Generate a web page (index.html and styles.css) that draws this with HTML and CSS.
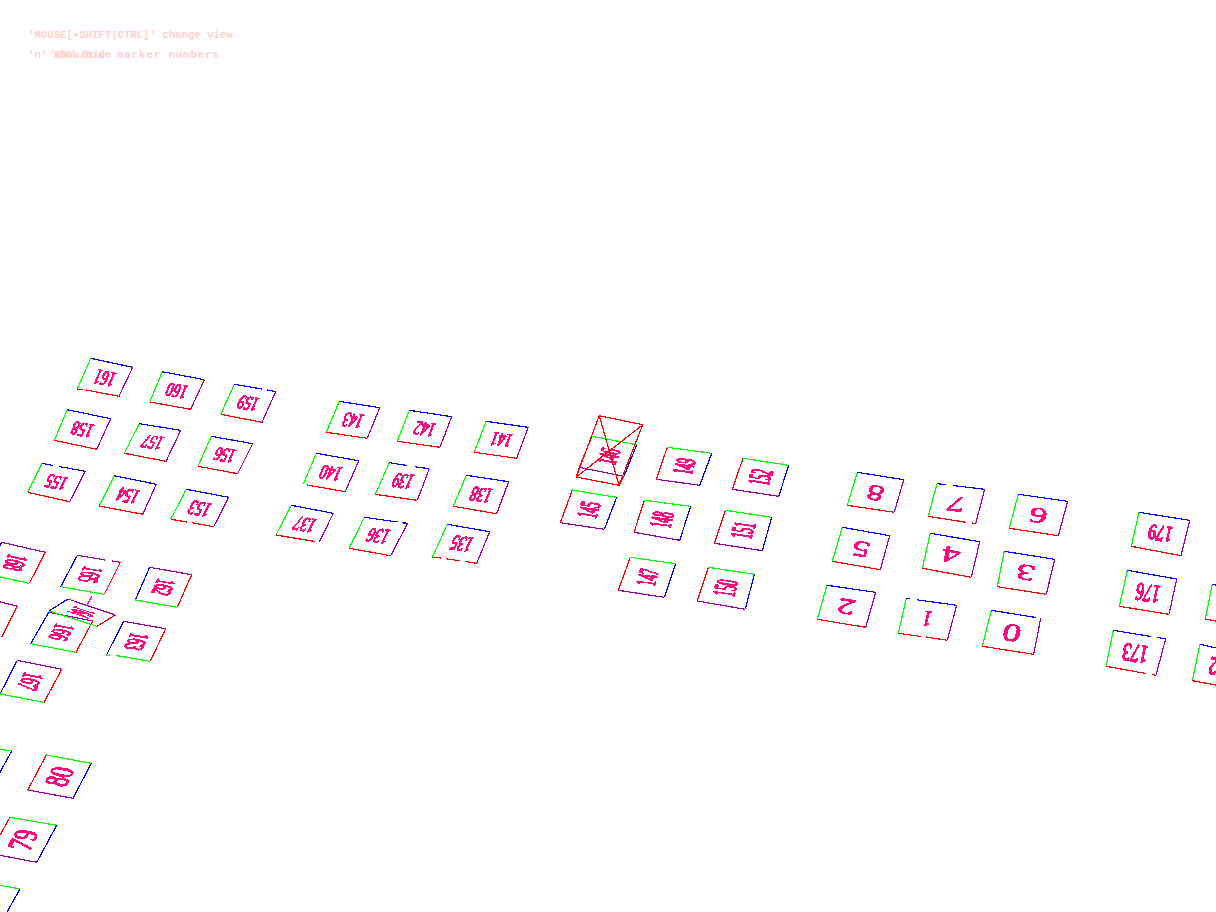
FILE: index.html
```html
<!DOCTYPE html>
<html lang="en">
<head>
<meta charset="utf-8">
<title>Marker viewer</title>
<link rel="stylesheet" href="styles.css">
</head>
<body>
<svg class="scene" width="1216" height="912" viewBox="0 0 1216 912" xmlns="http://www.w3.org/2000/svg">
<defs>
<filter id="hard" x="-10%" y="-10%" width="120%" height="120%" color-interpolation-filters="sRGB">
<feComponentTransfer><feFuncA type="discrete" tableValues="0 1 1"/></feComponentTransfer>
</filter>
</defs>
<g class="hud">
<text x="28" y="38">'MOUSE[+SHIFT|CTRL]' change view</text>
<text x="28" y="58">'n' show/hide</text>
<text x="117" y="58" class="hud-wider">marker numbers</text>
<text x="49" y="58" class="hud-exit">'ESC' exit</text>
</g>

<g class="marker"><path class="g" d="M90.7 358.3L77.3 389"/><path class="b" d="M90.7 358.3L132.7 367.3"/><path class="p" d="M132.7 367.3L119 396.3"/><path class="r" d="M119 396.3L86 390M83 389.6L77.3 389"/><text transform="matrix(-.42 -.09 .134 -.307 104.9 377.7)" textLength="48" lengthAdjust="spacingAndGlyphs" y="22">161</text></g>
<g class="marker"><path class="g" d="M162.3 371.7L149.7 402"/><path class="b" d="M162.3 371.7L204.3 379.7"/><path class="p" d="M204.3 379.7L190.7 409.3"/><path class="r" d="M190.7 409.3L149.7 402"/><text transform="matrix(-.42 -.08 .126 -.303 176.8 390.7)" textLength="48" lengthAdjust="spacingAndGlyphs" y="22">160</text></g>
<g class="marker"><path class="g" d="M234.3 384.3L220.7 414.3"/><path class="b" d="M234.3 384.3L262 389M267 390L275.7 391.7"/><path class="p" d="M275.7 391.7L262 422.3"/><path class="r" d="M262 422.3L220.7 414.3"/><text transform="matrix(-.414 -.074 .136 -.3 248.2 403.2)" textLength="48" lengthAdjust="spacingAndGlyphs" y="22">159</text></g>
<g class="marker"><path class="g" d="M67.3 409.7L54.3 440.3"/><path class="b" d="M67.3 409.7L110.7 418.7"/><path class="p" d="M110.7 418.7L96.7 449.3"/><path class="r" d="M96.7 449.3L54.3 440.3"/><text transform="matrix(-.434 -.09 .13 -.306 82.3 429.5)" textLength="48" lengthAdjust="spacingAndGlyphs" y="22">158</text></g>
<g class="marker"><path class="g" d="M139.3 423.7L124.3 453.3"/><path class="b" d="M139.3 423.7L180.7 430.3"/><path class="p" d="M180.7 430.3L166 461.3"/><path class="r" d="M166 461.3L124.3 453.3"/><text transform="matrix(-.414 -.066 .15 -.296 152.6 442.2)" textLength="48" lengthAdjust="spacingAndGlyphs" y="22">157</text></g>
<g class="marker"><path class="g" d="M211.3 436.3L198 466.3"/><path class="b" d="M211.3 436.3L252.7 443.7"/><path class="p" d="M252.7 443.7L237.7 473.7"/><path class="r" d="M237.7 473.7L198 466.3"/><text transform="matrix(-.414 -.074 .133 -.3 224.9 455)" textLength="48" lengthAdjust="spacingAndGlyphs" y="22">156</text></g>
<g class="marker"><path class="g" d="M42 463.3L27.7 492.3"/><path class="b" d="M42 463.3L53 465.5M59 466.5L85.3 471.3"/><path class="p" d="M85.3 471.3L69.7 501.7"/><path class="r" d="M69.7 501.7L27.7 492.3"/><text transform="matrix(-.433 -.08 .143 -.29 56.2 482.2)" textLength="48" lengthAdjust="spacingAndGlyphs" y="22">155</text></g>
<g class="marker"><path class="g" d="M114.3 475.7L99.3 506"/><path class="b" d="M114.3 475.7L156.3 484.3"/><path class="p" d="M156.3 484.3L142.7 514.3"/><path class="r" d="M142.7 514.3L99.3 506"/><text transform="matrix(-.42 -.086 .15 -.303 128.2 495.1)" textLength="48" lengthAdjust="spacingAndGlyphs" y="22">154</text></g>
<g class="marker"><path class="g" d="M186.3 489.3L170.7 519.3"/><path class="b" d="M186.3 489.3L228.7 497.3"/><path class="p" d="M228.7 497.3L213.7 526.7"/><path class="r" d="M213.7 526.7L192 522.8M187 522L170.7 519.3"/><text transform="matrix(-.424 -.08 .156 -.3 199.9 508.2)" textLength="48" lengthAdjust="spacingAndGlyphs" y="22">153</text></g>

<g class="marker"><path class="g" d="M339.3 401.3L326.3 432.3"/><path class="b" d="M339.3 401.3L379.7 407.7"/><path class="p" d="M379.7 407.7L367.3 438.3"/><path class="r" d="M367.3 438.3L326.3 432.3"/><text transform="matrix(-.404 -.064 .13 -.31 353.2 419.9)" textLength="48" lengthAdjust="spacingAndGlyphs" y="22">143</text></g>
<g class="marker"><path class="g" d="M409.3 410.3L397.3 441.3"/><path class="b" d="M409.3 410.3L451.7 416.7"/><path class="p" d="M451.7 416.7L440 447.3"/><path class="r" d="M440 447.3L397.3 441.3"/><text transform="matrix(-.424 -.064 .12 -.31 424.6 428.9)" textLength="48" lengthAdjust="spacingAndGlyphs" y="22">142</text></g>
<g class="marker"><path class="g" d="M486 421.3L474.3 452.3"/><path class="b" d="M486 421.3L528.3 427.3"/><path class="p" d="M528.3 427.3L516.7 458.3"/><path class="r" d="M516.7 458.3L474.3 452.3"/><text transform="matrix(-.423 -.06 .117 -.31 501.3 439.8)" textLength="48" lengthAdjust="spacingAndGlyphs" y="22">141</text></g>
<g class="marker"><path class="g" d="M316.3 453.3L303.3 484.3"/><path class="b" d="M316.3 453.3L358.7 460.7"/><path class="p" d="M358.7 460.7L345.3 491.7"/><path class="r" d="M345.3 491.7L307 485"/><text transform="matrix(-.424 -.074 .13 -.31 330.9 472.5)" textLength="48" lengthAdjust="spacingAndGlyphs" y="22">140</text></g>
<g class="marker"><path class="g" d="M389.3 462.7L375.3 494.3"/><path class="b" d="M389.3 462.7L407 465.5M415 466.8L429.3 468.7"/><path class="p" d="M429.3 468.7L417.3 500.3"/><path class="r" d="M417.3 500.3L375.3 494.3"/><text transform="matrix(-.4 -.06 .14 -.316 402.8 481.5)" textLength="48" lengthAdjust="spacingAndGlyphs" y="22">139</text></g>
<g class="marker"><path class="g" d="M466.3 475.3L453.3 506.3"/><path class="b" d="M466.3 475.3L508.7 481.7"/><path class="p" d="M508.7 481.7L496.7 513.7"/><path class="r" d="M496.7 513.7L453.3 506.3"/><text transform="matrix(-.424 -.064 .13 -.31 481.3 494.3)" textLength="48" lengthAdjust="spacingAndGlyphs" y="22">138</text></g>
<g class="marker"><path class="g" d="M291.3 505.3L276 535"/><path class="b" d="M291.3 505.3L333.3 513.3"/><path class="p" d="M333.3 513.3L319.3 542.3"/><path class="r" d="M315 541.5L276 535"/><text transform="matrix(-.42 -.08 .153 -.297 305 524)" textLength="48" lengthAdjust="spacingAndGlyphs" y="22">137</text></g>
<g class="marker"><path class="g" d="M364.3 517.3L349.3 548.3"/><path class="b" d="M364.3 517.3L397.5 522M402 522.8L407.7 523.3"/><path class="p" d="M407.7 523.3L390.7 555.7"/><path class="r" d="M390.7 555.7L349.3 548.3"/><text transform="matrix(-.434 -.06 .15 -.31 378 536.2)" textLength="48" lengthAdjust="spacingAndGlyphs" y="22">136</text></g>
<g class="marker"><path class="g" d="M447.3 524.3L432.3 557.3"/><path class="b" d="M447.3 524.3L489.7 531.7"/><path class="p" d="M489.7 531.7L476.7 563.3"/><path class="r" d="M476.7 563.3L465 561.5M460 560.8L446 558.8M441 558L432.3 557.3"/><text transform="matrix(-.424 -.074 .15 -.33 461.5 544.2)" textLength="48" lengthAdjust="spacingAndGlyphs" y="22">135</text></g>

<g class="marker"><path class="r" d="M592 436.3L579.3 467.3"/><path class="g" d="M592 436.3L636.7 444.7"/><path class="b" d="M636.7 444.7L624 476.3"/><path class="p" d="M624 476.3L579.3 467.3"/><text transform="matrix(.127 -.31 .447 .084 608 456.2)" textLength="48" lengthAdjust="spacingAndGlyphs" y="22">146</text></g>
<g class="marker"><path class="r" d="M667.3 447.3L656.3 479.3"/><path class="g" d="M667.3 447.3L711.7 453.3"/><path class="b" d="M711.7 453.3L699.7 485.3"/><path class="p" d="M699.7 485.3L656.3 479.3"/><text transform="matrix(.11 -.32 .444 .06 683.8 466.3)" textLength="48" lengthAdjust="spacingAndGlyphs" y="22">149</text></g>
<g class="marker"><path class="r" d="M743 458.3L732.3 489.3"/><path class="g" d="M743 458.3L788.7 465.3"/><path class="b" d="M788.7 465.3L778.7 496.3"/><path class="p" d="M778.7 496.3L732.3 489.3"/><text transform="matrix(.107 -.31 .457 .07 760.7 477.3)" textLength="48" lengthAdjust="spacingAndGlyphs" y="22">152</text></g>
<g class="marker"><path class="r" d="M572.3 490L560.3 522.7"/><path class="g" d="M572.3 490L616.7 497.3"/><path class="b" d="M616.7 497.3L604.3 529.3"/><path class="p" d="M604.3 529.3L560.3 522.7"/><text transform="matrix(.12 -.327 .444 .073 588.4 509.8)" textLength="48" lengthAdjust="spacingAndGlyphs" y="22">145</text></g>
<g class="marker"><path class="r" d="M644.3 500.3L634 532.3"/><path class="g" d="M644.3 500.3L690.7 506.3"/><path class="b" d="M690.7 506.3L679.7 540.3"/><path class="p" d="M679.7 540.3L634 532.3"/><text transform="matrix(.103 -.32 .464 .06 662.2 519.8)" textLength="48" lengthAdjust="spacingAndGlyphs" y="22">148</text></g>
<g class="marker"><path class="r" d="M725.3 510.3L714.3 543.3"/><path class="g" d="M725.3 510.3L771.7 517.3"/><path class="b" d="M771.7 517.3L762.3 550.7"/><path class="p" d="M762.3 550.7L714.3 543.3"/><text transform="matrix(.11 -.33 .464 .07 743.4 530.4)" textLength="48" lengthAdjust="spacingAndGlyphs" y="22">151</text></g>
<g class="marker"><path class="r" d="M630.3 557.3L618.3 590.3"/><path class="g" d="M630.3 557.3L675.7 563.7"/><path class="b" d="M675.7 563.7L664.3 597.3"/><path class="p" d="M664.3 597.3L618.3 590.3"/><text transform="matrix(.12 -.33 .454 .064 647.2 577.2)" textLength="48" lengthAdjust="spacingAndGlyphs" y="22">147</text></g>
<g class="marker"><path class="r" d="M708.3 567.3L697.3 601"/><path class="g" d="M708.3 567.3L754.3 574.3"/><path class="b" d="M754.3 574.3L745.3 609.3"/><path class="p" d="M745.3 609.3L697.3 601"/><text transform="matrix(.11 -.337 .46 .07 726.3 588)" textLength="48" lengthAdjust="spacingAndGlyphs" y="22">150</text></g>
<path class="box" d="M599.3 415.7L642.7 424.7L619 485.3L576.3 477ZM599.3 415.7L619 485.3M642.7 424.7L576.3 477M576.3 477L579.3 467.3M619 485.3L624 476.3"/>

<g class="marker"><path class="g" d="M857.3 472.3L847.3 505.3"/><path class="b" d="M857.3 472.3L903.7 479.7"/><path class="p" d="M903.7 479.7L894.3 512.3"/><path class="r" d="M894.3 512.3L847.3 505.3"/><text class="solo" transform="matrix(-.464 -.074 .1 -.33 875.7 492.4)" textLength="37" lengthAdjust="spacingAndGlyphs" y="21">8</text></g>
<g class="marker"><path class="g" d="M937 483.7L928.3 516.3"/><path class="b" d="M937 483.7L946 484.7M953 485.5L984.7 489.3"/><path class="p" d="M984.7 489.3L975.7 523.7"/><path class="r" d="M975.7 523.7L972 523M966 522.3L928.3 516.3"/><text class="solo" transform="matrix(-.477 -.056 .087 -.326 956.4 503.3)" textLength="37" lengthAdjust="spacingAndGlyphs" y="21">7</text></g>
<g class="marker"><path class="g" d="M1018.3 494.3L1009.3 528.3"/><path class="b" d="M1018.3 494.3L1067.7 501.3"/><path class="p" d="M1067.7 501.3L1058.3 535.7"/><path class="r" d="M1058.3 535.7L1009.3 528.3"/><text class="solo" transform="matrix(-.494 -.07 .09 -.34 1038.4 514.9)" textLength="37" lengthAdjust="spacingAndGlyphs" y="21">6</text></g>
<g class="marker"><path class="g" d="M842.3 527.3L832.3 561.3"/><path class="b" d="M842.3 527.3L889.7 535.7"/><path class="p" d="M889.7 535.7L880.3 569.7"/><path class="r" d="M880.3 569.7L832.3 561.3"/><text class="solo" transform="matrix(-.474 -.084 .1 -.34 861.2 548.5)" textLength="37" lengthAdjust="spacingAndGlyphs" y="21">5</text></g>
<g class="marker"><path class="g" d="M930.3 533.3L922.3 568.3"/><path class="b" d="M930.3 533.3L979.7 541.7"/><path class="p" d="M979.7 541.7L971.3 577.3"/><path class="r" d="M971.3 577.3L922.3 568.3"/><text class="solo" transform="matrix(-.494 -.084 .08 -.35 950.9 555.2)" textLength="37" lengthAdjust="spacingAndGlyphs" y="21">4</text></g>
<g class="marker"><path class="g" d="M1004.3 551.3L997.3 586.7"/><path class="b" d="M1004.3 551.3L1054.7 559.3"/><path class="p" d="M1054.7 559.3L1046.3 594.3"/><path class="r" d="M1046.3 594.3L997.3 586.7"/><text class="solo" transform="matrix(-.504 -.08 .07 -.354 1025.7 572.9)" textLength="37" lengthAdjust="spacingAndGlyphs" y="21">3</text></g>
<g class="marker"><path class="g" d="M827 585.3L817.3 619.3"/><path class="b" d="M827 585.3L875.7 592.3"/><path class="p" d="M875.7 592.3L865.7 627.3"/><path class="r" d="M865.7 627.3L817.3 619.3"/><text class="solo" transform="matrix(-.487 -.07 .097 -.34 846.4 606.1)" textLength="37" lengthAdjust="spacingAndGlyphs" y="21">2</text></g>
<g class="marker"><path class="g" d="M906.3 598.3L898.3 633.3"/><path class="b" d="M906.3 598.3L910 598.8M917 599.8L956.7 605.3"/><path class="p" d="M956.7 605.3L947.3 640.3"/><path class="r" d="M947.3 640.3L926 637M921 636.5L898.3 633.3"/><text class="solo" transform="matrix(-.504 -.07 .08 -.35 927.2 619.3)" textLength="20" lengthAdjust="spacingAndGlyphs" y="21">1</text></g>
<g class="marker"><path class="g" d="M991.3 610.3L982.3 646.3"/><path class="b" d="M991.3 610.3L1036 617.5"/><path class="p" d="M1040.7 618.3L1033.7 654.3"/><path class="r" d="M1033.7 654.3L982.3 646.3"/><text class="solo" transform="matrix(-.494 -.08 .09 -.36 1012 632.3)" textLength="37" lengthAdjust="spacingAndGlyphs" y="21">0</text></g>

<g class="marker"><path class="g" d="M1139 512.3L1131.3 546.3"/><path class="b" d="M1139 512.3L1189.7 520.3"/><path class="p" d="M1189.7 520.3L1181 555.7"/><path class="r" d="M1181 555.7L1131.3 546.3"/><text transform="matrix(-.507 -.08 .077 -.34 1160.3 533.7)" textLength="48" lengthAdjust="spacingAndGlyphs" y="22">179</text></g>
<g class="marker"><path class="g" d="M1127.3 570.3L1119.3 606.3"/><path class="b" d="M1127.3 570.3L1176.7 579"/><path class="p" d="M1176.7 579L1169 614.3"/><path class="r" d="M1169 614.3L1119.3 606.3"/><text transform="matrix(-.494 -.087 .08 -.36 1148 592.5)" textLength="48" lengthAdjust="spacingAndGlyphs" y="22">176</text></g>
<g class="marker"><path class="g" d="M1113.3 630.3L1106 666.3"/><path class="b" d="M1113.3 630.3L1151 636.5M1157 637.5L1165.7 638.7"/><path class="p" d="M1165.7 638.7L1156 675.3"/><path class="r" d="M1156 675.3L1152 674.5M1146 673.5L1106 666.3"/><text transform="matrix(-.524 -.084 .073 -.36 1135.3 652.7)" textLength="48" lengthAdjust="spacingAndGlyphs" y="22">173</text></g>
<g class="marker"><path class="g" d="M1212.3 584.3L1205.3 619"/><path class="b" d="M1212.3 584.3L1216 585"/><path class="r" d="M1205.3 619L1216 621"/></g>
<g class="marker"><path class="g" d="M1200 644.3L1192.3 680.7"/><path class="b" d="M1200 644.3L1216 648"/><path class="r" d="M1192.3 680.7L1216 685"/><text transform="matrix(-.52 -.087 .077 -.364 1221.8 667)" textLength="48" lengthAdjust="spacingAndGlyphs" y="22">172</text></g>

<g class="marker"><path class="b" d="M1.7 542.3L0 546"/><path class="p" d="M1.7 542.3L45.3 552.3"/><path class="r" d="M45.3 552.3L29.3 583.3"/><path class="g" d="M29.3 583.3L0 577"/><text transform="matrix(-.16 .31 -.436 -.1 15.5 562.8)" textLength="48" lengthAdjust="spacingAndGlyphs" y="22">168</text></g>
<g class="marker"><path class="b" d="M77.3 555.3L60.7 586.7"/><path class="p" d="M77.3 555.3L105 560M112 561L120.3 562.3"/><path class="r" d="M120.3 562.3L104.3 594.3"/><path class="g" d="M104.3 594.3L60.7 586.7"/><text transform="matrix(-.166 .314 -.43 -.07 90.7 574.7)" textLength="48" lengthAdjust="spacingAndGlyphs" y="22">165</text></g>
<g class="marker"><path class="b" d="M149.7 567.3L135.3 600"/><path class="p" d="M149.7 567.3L191.7 574.7"/><path class="r" d="M191.7 574.7L177.3 607.3"/><path class="g" d="M177.3 607.3L135.3 600"/><text transform="matrix(-.144 .327 -.42 -.074 163.5 587.3)" textLength="48" lengthAdjust="spacingAndGlyphs" y="22">162</text></g>
<g class="marker"><path class="p" d="M0 602L17.3 606.3"/><path class="r" d="M17.3 606.3L1.7 637"/></g>
<g class="marker"><path class="b" d="M48.7 612.3L30.7 643.7"/><path class="p" d="M48.7 612.3L92.7 621"/><path class="r" d="M92.7 621L76 652.3"/><path class="g" d="M76 652.3L30.7 643.7"/><text transform="matrix(-.18 .314 -.44 -.087 62 632.3)" textLength="48" lengthAdjust="spacingAndGlyphs" y="22">166</text></g>
<g class="marker"><path class="b" d="M123.7 621.3L106.3 655.3"/><path class="p" d="M123.7 621.3L165.7 628.7"/><path class="r" d="M165.7 628.7L150.3 661.3"/><path class="g" d="M150.3 661.3L116 655.5M110 655L106.3 655.3"/><text transform="matrix(-.174 .34 -.42 -.074 136.5 641.7)" textLength="48" lengthAdjust="spacingAndGlyphs" y="22">163</text></g>
<g class="marker"><path class="b" d="M17.3 660.3L0 694"/><path class="p" d="M17.3 660.3L61.7 669.3"/><path class="r" d="M61.7 669.3L44 702.3"/><path class="g" d="M44 702.3L0 694"/><text transform="matrix(-.173 .337 -.444 -.09 30.8 681.5)" textLength="48" lengthAdjust="spacingAndGlyphs" y="22">167</text></g>
<g class="marker"><path class="b" d="M68 599L49 611"/><path class="p" d="M68 599L115.3 615"/><path class="r" d="M115.3 615L97 626.3"/><path class="g" d="M97 626.3L49 611"/><path class="m" d="M87.3 605L91.7 596"/><text transform="matrix(-.19 .12 -.473 -.16 82 612.5)" textLength="48" lengthAdjust="spacingAndGlyphs" y="22">164</text></g>

<g class="marker"><path class="g" d="M0 749.3L11.7 751"/><path class="b" d="M11.7 751L0 772.3"/></g>
<g class="marker"><path class="r" d="M46.3 755L27.7 790"/><path class="g" d="M46.3 755L91.3 763.3"/><path class="b" d="M91.3 763.3L73 798.3"/><path class="p" d="M73 798.3L27.7 790"/><text class="duo" transform="matrix(.186 -.35 .45 .083 59.6 776.7)" textLength="52" lengthAdjust="spacingAndGlyphs" y="24">80</text></g>
<g class="marker"><path class="r" d="M10 817.3L0 835"/><path class="g" d="M10 817.3L56.7 825.3"/><path class="b" d="M56.7 825.3L36.7 862.3"/><path class="p" d="M36.7 862.3L0 855.3"/><text class="duo" transform="matrix(.193 -.374 .467 .08 23.5 839.9)" textLength="52" lengthAdjust="spacingAndGlyphs" y="24">79</text></g>
<g class="marker"><path class="g" d="M0 885.3L20 889"/><path class="b" d="M20 889L7 912"/></g>
</svg>
</body>
</html>
```
FILE: styles.css
```css
html, body {
  margin: 0;
  padding: 0;
  background: #fff;
  overflow: hidden;
}

.scene {
  display: block;
  width: 1216px;
  height: 912px;
  background: #fff;
}

.hud text {
  font-family: "Liberation Mono", monospace;
  font-size: 10.67px;
  font-weight: 700;
  fill: #ffcfcf;
}

.hud .hud-wider {
  letter-spacing: 0.95px;
}

.hud .hud-exit {
  font-size: 10px;
  letter-spacing: -0.5px;
}

.marker path,
.box {
  fill: none;
  stroke-width: 1.2;
  shape-rendering: crispEdges;
}

.marker .r { stroke: #ff0000; }
.marker .g { stroke: #00ff00; }
.marker .b { stroke: #0000ff; }
.marker .p { stroke: #9900aa; }
.marker .m { stroke: #ff00ff; }
.box { stroke: #ff0000; }

.marker text {
  font-family: "Liberation Serif", serif;
  font-size: 66px;
  fill: #ff0a7f;
  stroke: #ff0a7f;
  stroke-width: 2.2px;
  text-anchor: middle;
  filter: url(#hard);
}

.marker .solo {
  font-size: 66px;
  stroke-width: 0.8px;
}

.marker .duo {
  font-size: 72px;
  stroke-width: 1.6px;
}
```
